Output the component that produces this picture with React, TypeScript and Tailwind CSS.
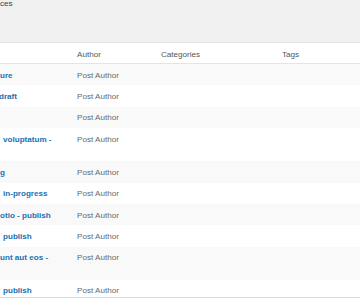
import React from "react";

type Row = { t: string; ml: string; tall?: boolean };

const rows: Row[] = [
  { t: "ure", ml: "ml-0" },
  { t: "draft", ml: "-ml-[1px]" },
  { t: "", ml: "ml-0" },
  { t: "voluptatum -", ml: "ml-[3px]", tall: true },
  { t: "g", ml: "ml-0" },
  { t: "in-progress", ml: "ml-[3px]" },
  { t: "otio - publish", ml: "ml-0" },
  { t: "publish", ml: "ml-[3px]" },
  { t: "unt aut eos -", ml: "ml-0", tall: true },
  { t: "publish", ml: "ml-[3px]" },
];

export default function App() {
  return (
    <div
      className="w-[360px] h-[300px] overflow-hidden bg-white text-[8.1px] leading-[11.7px]"
      style={{ fontFamily: '"Liberation Sans", Arial, sans-serif' }}
    >
      <div className="h-[43px] bg-[#f0f0f1] border-b border-[#e2e4e7]">
        <div className="leading-[8px] text-[#3c434a]">ces</div>
      </div>
      <div className="flex h-[21px] items-center pt-[3px] bg-white border-b border-[#e2e4e7] text-[#50575e]">
        <div className="w-[71px]" />
        <div className="w-[84px] pl-[6px]">Author</div>
        <div className="w-[121px] pl-[6px]">Categories</div>
        <div className="flex-1 pl-[6px]">Tags</div>
      </div>
      {rows.map((r, i) => (
        <div
          key={i}
          className={`flex ${r.tall ? "h-[33px]" : i === rows.length - 1 ? "h-[18px] border-b border-[#dcdcde]" : "h-[21.4px]"} ${i % 2 === 0 ? "bg-[#f9f9f9]" : "bg-white"}`}
        >
          <div className="w-[71px] overflow-hidden pt-[5.6px] whitespace-nowrap">
            <div className={`${r.ml} font-bold text-[#2271b1]`}>{r.t}</div>
          </div>
          <div className="w-[84px] pl-[6px] pt-[5.6px] text-[#646970]">Post Author</div>
          <div className="w-[121px]" />
          <div className="flex-1" />
        </div>
      ))}
    </div>
  );
}
